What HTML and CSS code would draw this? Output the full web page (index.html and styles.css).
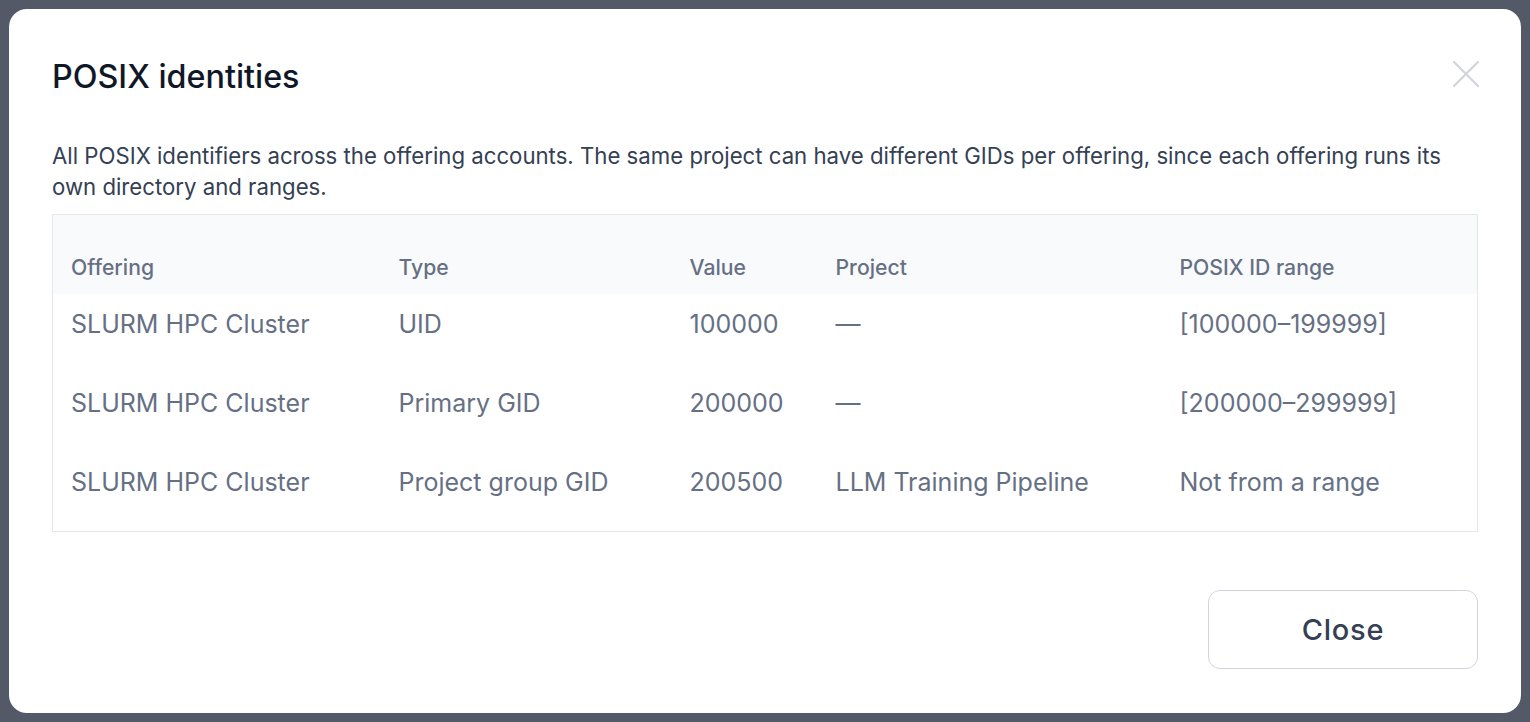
FILE: index.html
```html
<!DOCTYPE html>
<html lang="en">
<head>
  <meta charset="UTF-8" />
  <meta name="viewport" content="width=device-width, initial-scale=1" />
  <title>POSIX identities</title>
  <link rel="stylesheet" href="styles.css">
</head>
<body>
  <div class="backdrop">
    <div class="modal">
      <div class="modal-header">
        <h1 class="modal-title">POSIX identities</h1>
        <button class="icon-close" type="button" aria-label="Close">
          <svg width="26" height="26" viewBox="0 0 26 26" fill="none">
            <path d="M1 1L25 25M25 1L1 25" stroke="#d0d5dd" stroke-width="2.2" stroke-linecap="round"/>
          </svg>
        </button>
      </div>

      <p class="modal-text">All POSIX identifiers across the offering accounts. The same project can have different GIDs per offering, since each offering runs its own directory and ranges.</p>

      <table class="ids">
        <colgroup>
          <col class="c-offering">
          <col class="c-type">
          <col class="c-value">
          <col class="c-project">
          <col class="c-range">
        </colgroup>
        <thead>
          <tr>
            <th>Offering</th>
            <th>Type</th>
            <th>Value</th>
            <th>Project</th>
            <th>POSIX ID range</th>
          </tr>
        </thead>
        <tbody>
          <tr>
            <td>SLURM HPC Cluster</td>
            <td>UID</td>
            <td>100000</td>
            <td>—</td>
            <td>[100000–199999]</td>
          </tr>
          <tr>
            <td>SLURM HPC Cluster</td>
            <td>Primary GID</td>
            <td>200000</td>
            <td>—</td>
            <td>[200000–299999]</td>
          </tr>
          <tr>
            <td>SLURM HPC Cluster</td>
            <td>Project group GID</td>
            <td>200500</td>
            <td>LLM Training Pipeline</td>
            <td>Not from a range</td>
          </tr>
        </tbody>
      </table>

      <div class="modal-footer">
        <button class="btn" type="button">Close</button>
      </div>
    </div>
  </div>
</body>
</html>
```

FILE: styles.css
```css
html, body {
  margin: 0;
  height: 100%;
}
body {
  font-family: Inter, "Noto Sans", sans-serif;
  background: #535966;
}
.backdrop {
  padding: 9px;
  height: 100%;
  box-sizing: border-box;
}
.modal {
  background: #fff;
  border-radius: 18px;
  padding: 50px 43px 44px;
  height: 704px;
  box-sizing: border-box;
}
.modal-header {
  display: flex;
  justify-content: space-between;
  align-items: center;
}
.modal-title {
  margin: 0;
  font-size: 32.3px;
  line-height: 36px;
  font-weight: 500;
  color: #101828;
}
.icon-close {
  background: none;
  border: none;
  padding: 0;
  margin-right: -1px;
  margin-top: -6px;
  display: flex;
  cursor: pointer;
}
.modal-text {
  margin: 45px 0 12px;
  font-size: 22.2px;
  line-height: 31px;
  color: #344054;
}
.ids {
  width: 100%;
  border-collapse: collapse;
  border: 1px solid #e4e7ec;
  table-layout: fixed;
}
.c-offering { width: 328px; }
.c-type { width: 291px; }
.c-value { width: 146px; }
.c-project { width: 344px; }
.ids th {
  background: #f9fafb;
  text-align: left;
  font-weight: 500;
  font-size: 21.2px;
  line-height: 30px;
  color: #667085;
  padding: 37px 18px 12px;
}
.ids td {
  font-size: 25px;
  line-height: 36px;
  color: #667085;
  padding: 12px 18px 31px;
}
.modal-footer {
  display: flex;
  justify-content: flex-end;
  margin-top: 58px;
}
.btn {
  width: 270px;
  height: 79px;
  background: #fff;
  border: 1px solid #d0d5dd;
  border-radius: 12px;
  font-family: Inter, "Noto Sans", sans-serif;
  font-size: 29px;
  font-weight: 500;
  letter-spacing: 0.8px;
  color: #344054;
  cursor: pointer;
}
```
